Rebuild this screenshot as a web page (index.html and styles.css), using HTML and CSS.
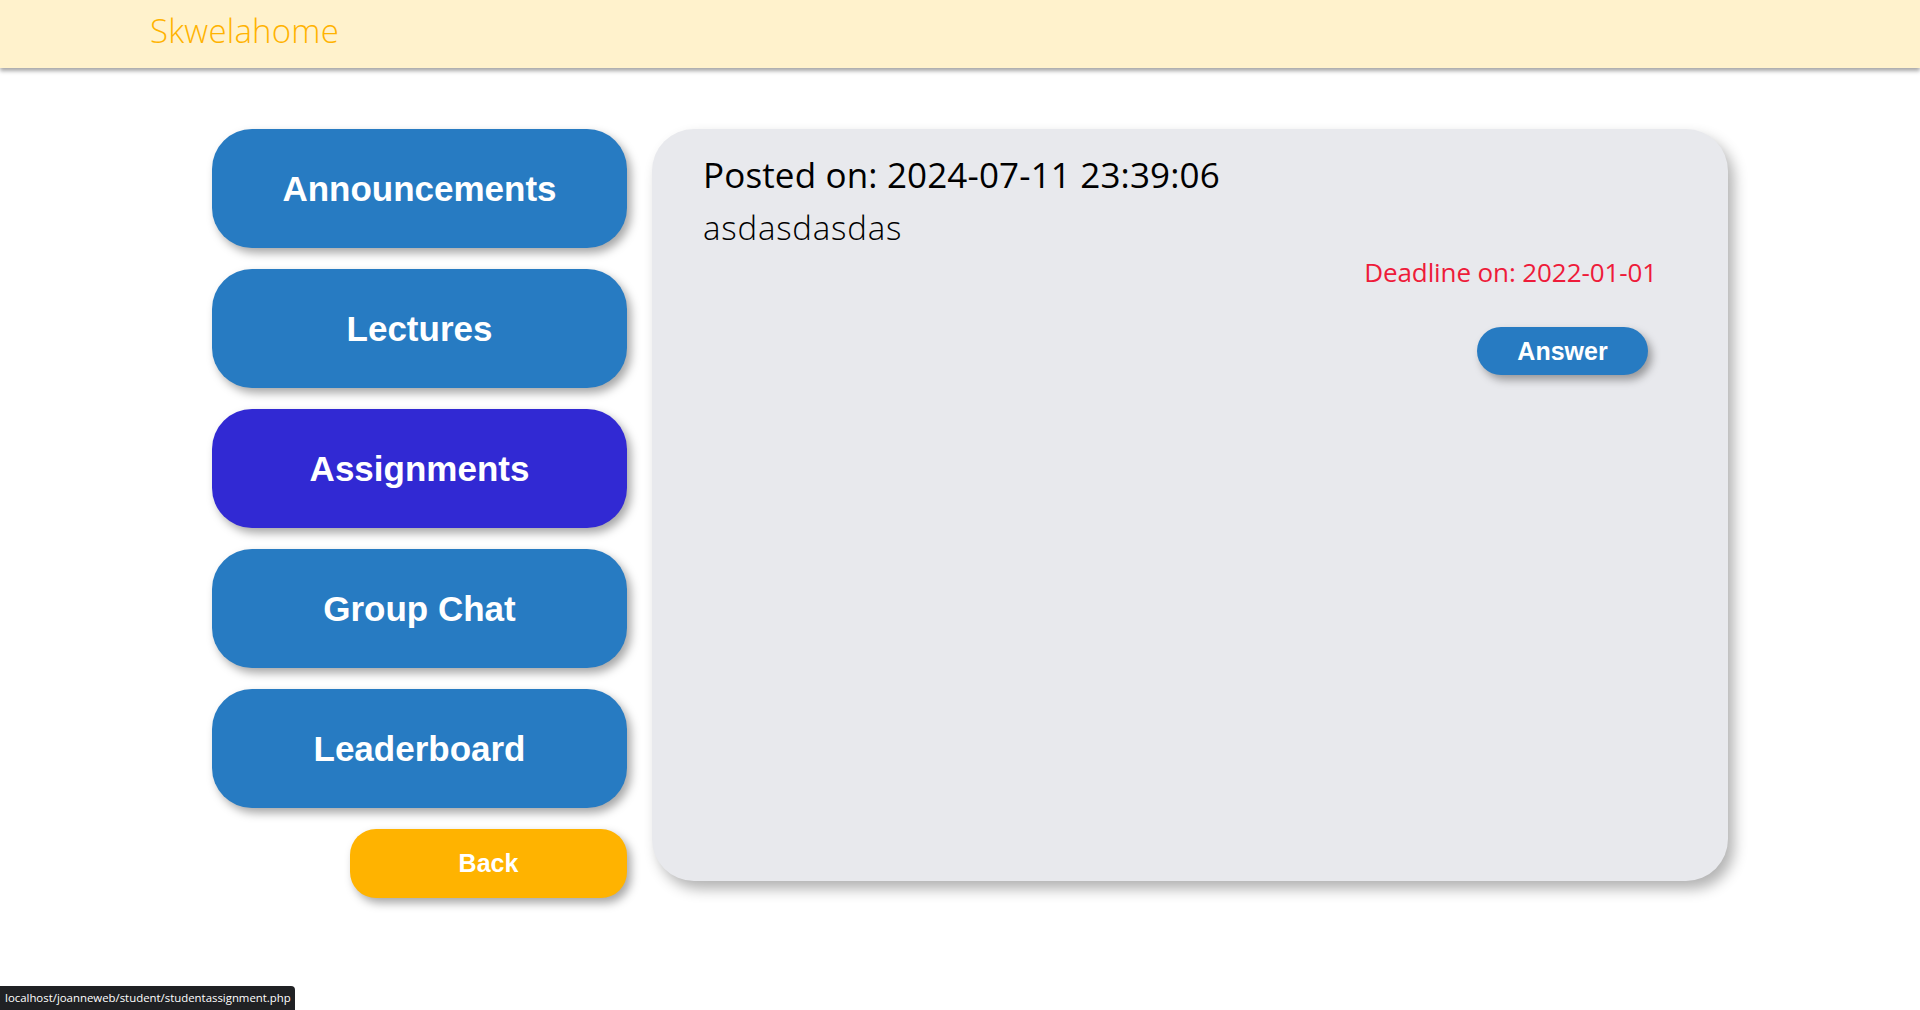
FILE: index.html
```html
<!DOCTYPE html>
<html>
<head>
<meta charset="utf-8">
<link rel="stylesheet" href="styles.css">
</head>
<body>
<header class="topbar">
  <span class="logo">Skwelahome</span>
</header>
<main class="layout">
  <nav class="sidebar">
    <a class="nav-btn">Announcements</a>
    <a class="nav-btn">Lectures</a>
    <a class="nav-btn active">Assignments</a>
    <a class="nav-btn">Group Chat</a>
    <a class="nav-btn">Leaderboard</a>
    <a class="back-btn">Back</a>
  </nav>
  <section class="card">
    <h2 class="posted">Posted on: 2024-07-11 23:39:06</h2>
    <p class="desc">asdasdasdas</p>
    <p class="deadline">Deadline on: 2022-01-01</p>
    <div class="actions"><a class="answer-btn">Answer</a></div>
  </section>
</main>
<div class="status">localhost/joanneweb/student/studentassignment.php</div>
</body>
</html>
```
FILE: styles.css
```css
html, body {
  margin: 0;
  padding: 0;
  background: #ffffff;
}
body {
  font-family: "Open Sans", sans-serif;
  height: 1010px;
  overflow: hidden;
}
.topbar {
  height: 68px;
  box-sizing: border-box;
  background: #fff2cc;
  box-shadow: 0 3px 4px rgba(0, 0, 0, 0.35);
  display: flex;
  align-items: center;
  padding: 0 0 8px 150px;
  position: relative;
  z-index: 2;
}
.logo {
  font-family: "Open Sans", sans-serif;
  font-weight: 300;
  font-size: 33px;
  line-height: 45px;
  color: #ffb300;
  letter-spacing: 0.2px;
}
.layout {
  display: flex;
  gap: 24px;
  padding: 61px 0 0 212px;
  align-items: flex-start;
}
.sidebar {
  width: 416px;
  display: flex;
  flex-direction: column;
  align-items: flex-end;
  gap: 21px;
}
.nav-btn {
  width: 415px;
  height: 119px;
  border-radius: 40px;
  background: #277bc2;
  color: #ffffff;
  font-family: "Liberation Sans", Arial, sans-serif;
  font-weight: bold;
  font-size: 35px;
  display: flex;
  align-items: center;
  justify-content: center;
  box-shadow: 4px 5px 10px rgba(0, 0, 0, 0.35);
  align-self: flex-start;
}
.nav-btn.active {
  background: #3129d3;
}
.back-btn {
  width: 277px;
  height: 69px;
  border-radius: 26px;
  background: #ffb300;
  color: #ffffff;
  font-family: "Liberation Sans", Arial, sans-serif;
  font-weight: bold;
  font-size: 25px;
  display: flex;
  align-items: center;
  justify-content: center;
  box-shadow: 4px 5px 10px rgba(0, 0, 0, 0.35);
  margin-right: 1px;
}
.card {
  width: 1076px;
  height: 752px;
  box-sizing: border-box;
  background: #e8e9ed;
  border-radius: 42px;
  box-shadow: 6px 8px 14px rgba(0, 0, 0, 0.3);
  padding: 25px 71px 0 51px;
  display: flex;
  flex-direction: column;
}
.posted {
  margin: 0;
  font-family: "Open Sans", sans-serif;
  font-weight: 500;
  font-size: 35px;
  line-height: 42px;
  letter-spacing: 0.15px;
  color: #000;
}
.desc {
  margin: 14px 0 0 0;
  font-family: "Open Sans", sans-serif;
  font-weight: 300;
  font-size: 33px;
  line-height: 36px;
  letter-spacing: 0.8px;
  color: #000;
}
.deadline {
  margin: 9px 0 0 0;
  text-align: right;
  font-family: "Open Sans", sans-serif;
  font-size: 26px;
  line-height: 34px;
  letter-spacing: -0.1px;
  color: #ee1b3a;
}
.actions {
  display: flex;
  justify-content: flex-end;
  margin-top: 38px;
  padding-right: 9px;
}
.answer-btn {
  width: 171px;
  height: 48px;
  border-radius: 24px;
  background: #277bc2;
  color: #fff;
  font-family: "Liberation Sans", Arial, sans-serif;
  font-weight: bold;
  font-size: 25px;
  display: flex;
  align-items: center;
  justify-content: center;
  box-shadow: 4px 5px 8px rgba(0, 0, 0, 0.35);
}
.status {
  position: fixed;
  left: 0;
  bottom: 0;
  height: 24px;
  width: 295px;
  box-sizing: border-box;
  background: #202124;
  color: #ffffff;
  font-family: "Open Sans", sans-serif;
  font-size: 11.4px;
  line-height: 24px;
  padding-left: 5px;
  border-top-right-radius: 4px;
  white-space: nowrap;
  overflow: hidden;
}
```
